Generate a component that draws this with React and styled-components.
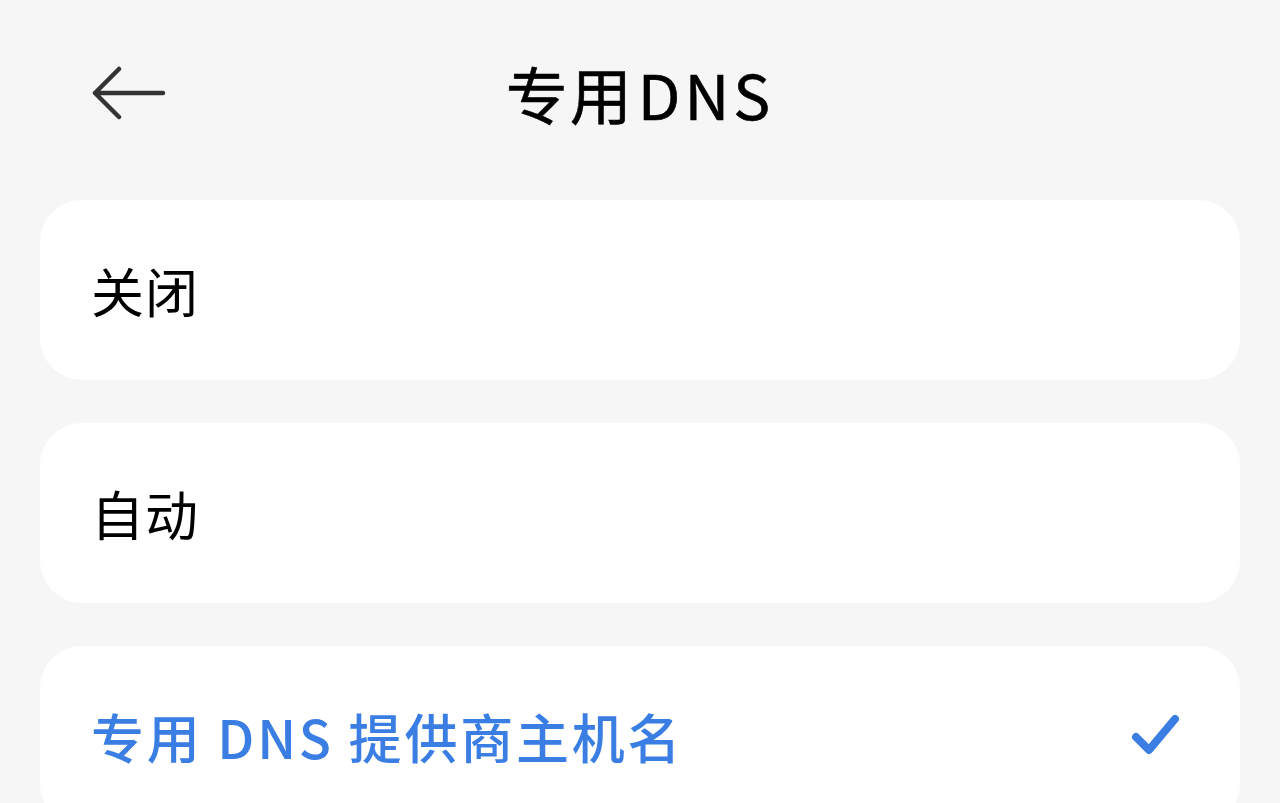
import React from "react";
import styled, { createGlobalStyle } from "styled-components";

const GlobalStyle = createGlobalStyle`
  html, body {
    margin: 0;
    padding: 0;
    height: 100%;
    overflow: hidden;
    background: #f6f6f6;
  }
  body {
    font-family: "Noto Sans CJK SC", "Noto Sans", sans-serif;
    color: #000;
  }
`;

const Page = styled.div`
  padding: 0 40px;
  display: flex;
  flex-direction: column;
`;

const Header = styled.header`
  height: 186px;
  display: grid;
  grid-template-columns: 1fr auto 1fr;
  align-items: center;
  margin-bottom: 14px;
`;

const BackButton = styled.button`
  justify-self: start;
  margin-left: 52px;
  width: 76px;
  height: 56px;
  padding: 0;
  border: none;
  background: transparent;
  display: flex;
  align-items: center;
  justify-content: center;
  cursor: pointer;
`;

const Title = styled.h1`
  margin: 0;
  font-size: 62px;
  font-weight: 400;
  letter-spacing: 2px;
  line-height: 1;
  -webkit-text-stroke: 0.6px #000;

  span {
    letter-spacing: 4px;
    margin-left: 4px;
  }
`;

const List = styled.div`
  display: flex;
  flex-direction: column;
  gap: 43px;
`;

const Option = styled.div`
  height: 180px;
  background: #fff;
  border-radius: 42px;
  display: flex;
  align-items: center;
  justify-content: space-between;
  padding: 0 55px 0 51px;
  box-sizing: border-box;
  flex-shrink: 0;
`;

const Label = styled.span`
  font-size: 53px;
  font-weight: ${(p) => (p.$active ? 500 : 400)};
  color: ${(p) => (p.$active ? "#3a7de3" : "#000")};
  letter-spacing: ${(p) => (p.$active ? "2.8px" : "1px")};
  line-height: 1;
`;

const ArrowIcon = () => (
  <svg width="76" height="56" viewBox="0 0 76 56" fill="none">
    <path
      d="M3 28H71M27 4L3 28L27 52"
      stroke="#333"
      strokeWidth="4.5"
      strokeLinecap="round"
      strokeLinejoin="round"
    />
  </svg>
);

const CheckIcon = () => (
  <svg width="54" height="44" viewBox="0 0 54 44" fill="none">
    <path
      d="M5 23L18 36L44 5"
      stroke="#3a7de3"
      strokeWidth="8"
      strokeLinecap="round"
      strokeLinejoin="round"
    />
  </svg>
);

const options = [
  { id: "off", label: "关闭" },
  { id: "auto", label: "自动" },
  { id: "host", label: "专用 DNS 提供商主机名" },
];

export default function App() {
  const selected = "host";
  return (
    <Page>
      <GlobalStyle />
      <Header>
        <BackButton aria-label="返回">
          <ArrowIcon />
        </BackButton>
        <Title>
          专用<span>DNS</span>
        </Title>
        <span />
      </Header>
      <List>
        {options.map((o) => (
          <Option key={o.id}>
            <Label $active={o.id === selected}>{o.label}</Label>
            {o.id === selected && <CheckIcon />}
          </Option>
        ))}
      </List>
    </Page>
  );
}
